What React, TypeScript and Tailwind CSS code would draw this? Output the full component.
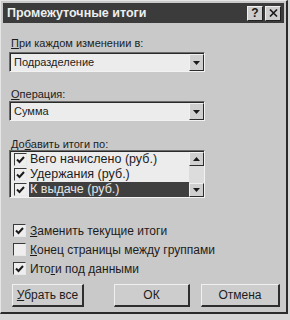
import React from 'react';

const font = { fontFamily: '"Liberation Sans", Arial, sans-serif' };

function U({ children }: { children: React.ReactNode }) {
  return <span className="underline underline-offset-[1px]">{children}</span>;
}

function Arrow({ up = false }: { up?: boolean }) {
  return (
    <svg width="7" height="4" viewBox="0 0 7 4" className={up ? 'rotate-180' : ''}>
      <path d="M0 0h7L3.5 4z" fill="#1a1a1a" />
    </svg>
  );
}

function Combo({ value }: { value: string }) {
  return (
    <div className="w-[196px] h-[20px] flex items-stretch border-t border-l border-t-[#6a6a6a] border-l-[#6a6a6a] border-b border-r border-b-[#f2f2f2] border-r-[#f2f2f2]">
      <div className="flex-1 flex items-stretch border-t border-l border-t-[#2a2a2a] border-l-[#2a2a2a] bg-[#ececec]">
        <div className="flex-1 pl-[3px] leading-[17px] text-[11px] text-[#1c1c1c]">{value}</div>
        <div className="w-[15px] flex items-center justify-center bg-[#cfcfcf] border-t border-l border-[#f0f0f0] border-r border-b border-r-[#2c2c2c] border-b-[#2c2c2c]">
          <Arrow />
        </div>
      </div>
    </div>
  );
}

function Check({ checked }: { checked: boolean }) {
  return (
    <div className="w-[13px] h-[13px] shrink-0 flex items-center justify-center bg-[#eeeeee] border-t border-l border-t-[#3a3a3a] border-l-[#3a3a3a] border-b border-r border-b-[#e8e8e8] border-r-[#e8e8e8]">
      {checked && (
        <svg width="9" height="8" viewBox="0 0 9 8">
          <path d="M1 3.5 3.5 6 8 1" stroke="#1a1a1a" strokeWidth="2" fill="none" />
        </svg>
      )}
    </div>
  );
}

function ListRow({ label, selected = false }: { label: string; selected?: boolean }) {
  return (
    <div className="h-[15px] flex items-center gap-[2px]">
      <Check checked />
      <span
        className={`text-[12.5px] leading-[15px] pl-[1px] pr-[2px] ${selected ? 'bg-[#3f3f3f] text-[#e6e6e6] flex-1' : 'text-[#1c1c1c]'}`}
      >
        {label}
      </span>
    </div>
  );
}

function Button({ children, w }: { children: React.ReactNode; w: string }) {
  return (
    <div
      className={`${w} h-[23px] flex items-center justify-center text-[12px] text-[#1c1c1c] bg-[#cdcdcd] border-t border-l border-t-[#f0f0f0] border-l-[#f0f0f0] border-b-2 border-r-2 border-b-[#2e2e2e] border-r-[#2e2e2e]`}
    >
      {children}
    </div>
  );
}

export default function App() {
  return (
    <div className="w-[290px] h-[320px] bg-[#d6d6d6]" style={font}>
      <div className="w-[288px] h-[314px] flex flex-col bg-[#c9c9c9] border-t border-l border-t-[#e6e6e6] border-l-[#e6e6e6] border-b-2 border-r-2 border-b-[#2a2a2a] border-r-[#2a2a2a] p-[2px]">
        {/* title bar */}
        <div className="h-[20px] flex items-center bg-[#3b3b3b] pl-[4px] pr-[3px]">
          <span className="flex-1 text-[12.5px] font-bold text-[#eeeeee]">Промежуточные итоги</span>
          <div className="w-[16px] h-[15px] flex items-center justify-center bg-[#cdcdcd] border-t border-l border-[#f0f0f0] border-r border-b border-r-[#222] border-b-[#222] text-[12px] font-bold leading-none text-[#1a1a1a]">
            ?
          </div>
          <div className="ml-[2px] w-[16px] h-[15px] flex items-center justify-center bg-[#cdcdcd] border-t border-l border-[#f0f0f0] border-r border-b border-r-[#222] border-b-[#222]">
            <svg width="9" height="8" viewBox="0 0 9 8">
              <path d="M1 0.5 8 7.5M8 0.5 1 7.5" stroke="#1a1a1a" strokeWidth="1.6" />
            </svg>
          </div>
        </div>

        <div className="flex flex-col pl-[6px] text-[11px] text-[#1c1c1c]">
          <div className="mt-[13px] leading-[14px] pl-[2px]">
            <U>П</U>ри каждом изменении в:
          </div>
          <div className="mt-[2px]">
            <Combo value="Подразделение" />
          </div>

          <div className="mt-[15px] leading-[14px] pl-[2px]">
            <U>О</U>перация:
          </div>
          <div>
            <Combo value="Сумма" />
          </div>

          <div className="mt-[17px] leading-[12px] pl-[2px]">
            До<U>б</U>авить итоги по:
          </div>
          {/* list box */}
          <div className="w-[196px] h-[48px] flex border-t border-l border-t-[#6a6a6a] border-l-[#6a6a6a] border-b border-r border-b-[#f2f2f2] border-r-[#f2f2f2]">
            <div className="flex-1 flex border-t border-l border-t-[#2a2a2a] border-l-[#2a2a2a] bg-[#ececec]">
              <div className="flex-1 flex flex-col pl-[3px]">
                <ListRow label="Вего начислено (руб.)" />
                <ListRow label="Удержания (руб.)" />
                <ListRow label="К выдаче (руб.)" selected />
              </div>
              <div className="w-[15px] flex flex-col bg-[#dcdcdc]">
                <div className="h-[14px] flex items-center justify-center bg-[#cfcfcf] border-t border-l border-[#f0f0f0] border-r border-b border-r-[#2c2c2c] border-b-[#2c2c2c]">
                  <Arrow up />
                </div>
                <div className="flex-1" />
                <div className="h-[14px] flex items-center justify-center bg-[#cfcfcf] border-t border-l border-[#f0f0f0] border-r border-b border-r-[#2c2c2c] border-b-[#2c2c2c]">
                  <Arrow />
                </div>
              </div>
            </div>
          </div>

          <div className="mt-[26px] flex flex-col gap-[6px] pl-[4px] text-[12px]">
            <div className="h-[13px] flex items-center gap-[4px]">
              <Check checked />
              <span>
                <U>З</U>аменить текущие итоги
              </span>
            </div>
            <div className="h-[13px] flex items-center gap-[4px]">
              <Check checked={false} />
              <span>
                <U>К</U>онец страницы между группами
              </span>
            </div>
            <div className="h-[13px] flex items-center gap-[4px]">
              <Check checked />
              <span>
                Ито<U>г</U>и под данными
              </span>
            </div>
          </div>

          <div className="mt-[9px] flex pl-[3px]">
            <Button w="w-[72px]">
              <span>
                <U>У</U>брать все
              </span>
            </Button>
            <div className="ml-[30px]">
              <Button w="w-[76px]">ОК</Button>
            </div>
            <div className="ml-[11px]">
              <Button w="w-[79px]">Отмена</Button>
            </div>
          </div>
        </div>
      </div>
    </div>
  );
}
